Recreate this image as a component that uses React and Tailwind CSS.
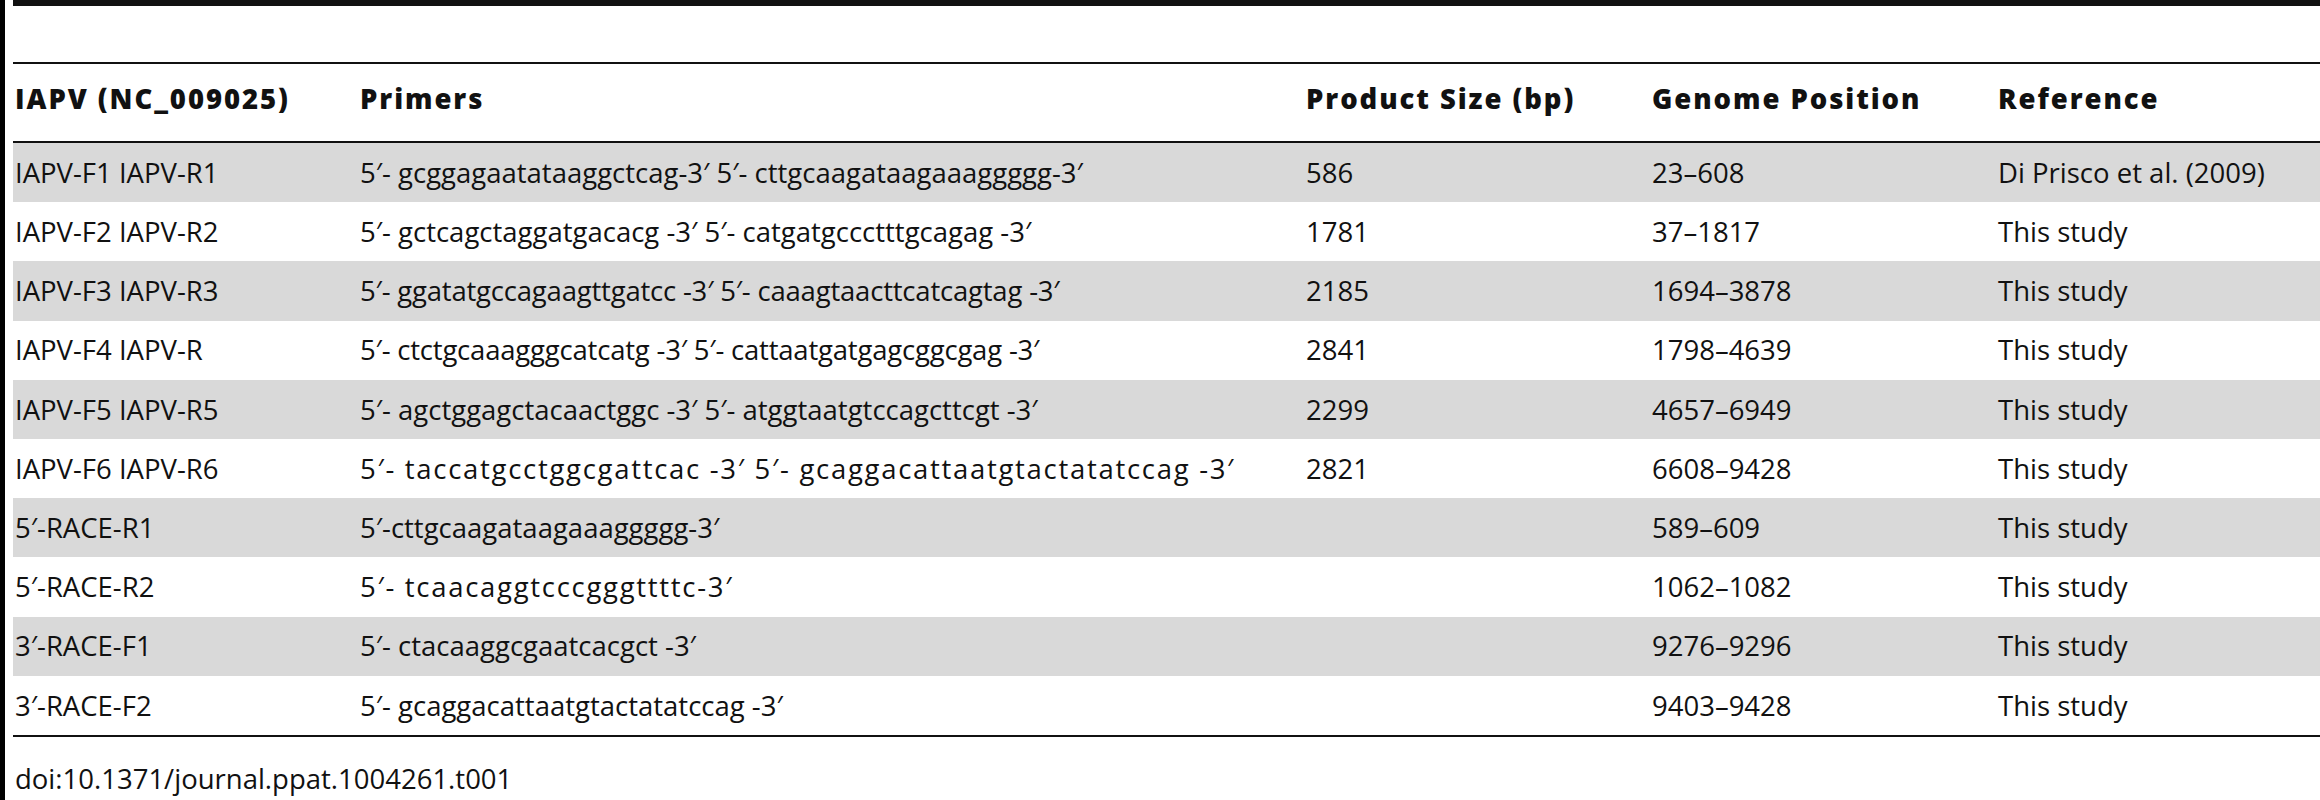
import React from 'react';

const rows = [
  ['IAPV-F1 IAPV-R1', '5′- gcggagaatataaggctcag-3′ 5′- cttgcaagataagaaaggggg-3′', '586', '23–608', 'Di Prisco et al. (2009)', ''],
  ['IAPV-F2 IAPV-R2', '5′- gctcagctaggatgacacg -3′ 5′- catgatgccctttgcagag -3′', '1781', '37–1817', 'This study', ''],
  ['IAPV-F3 IAPV-R3', '5′- ggatatgccagaagttgatcc -3′ 5′- caaagtaacttcatcagtag -3′', '2185', '1694–3878', 'This study', 'tracking-[-0.2px]'],
  ['IAPV-F4 IAPV-R', '5′- ctctgcaaagggcatcatg -3′ 5′- cattaatgatgagcggcgag -3′', '2841', '1798–4639', 'This study', 'tracking-[-0.2px]'],
  ['IAPV-F5 IAPV-R5', '5′- agctggagctacaactggc -3′ 5′- atggtaatgtccagcttcgt -3′', '2299', '4657–6949', 'This study', ''],
  ['IAPV-F6 IAPV-R6', '5′- taccatgcctggcgattcac -3′ 5′- gcaggacattaatgtactatatccag -3′', '2821', '6608–9428', 'This study', 'tracking-[1.7px]'],
  ['5′-RACE-R1', '5′-cttgcaagataagaaaggggg-3′', '', '589–609', 'This study', ''],
  ['5′-RACE-R2', '5′- tcaacaggtcccgggttttc-3′', '', '1062–1082', 'This study', 'tracking-[1.7px]'],
  ['3′-RACE-F1', '5′- ctacaaggcgaatcacgct -3′', '', '9276–9296', 'This study', ''],
  ['3′-RACE-F2', '5′- gcaggacattaatgtactatatccag -3′', '', '9403–9428', 'This study', ''],
];

const cols = 'grid grid-cols-[345px_946px_346px_346px_1fr] items-center pl-[2px]';

export default function App() {
  return (
    <div className="flex h-[800px] w-[2320px] bg-white text-[#111] font-['Open_Sans','Noto_Sans',sans-serif] text-[27.5px] leading-none overflow-hidden">
      <div className="w-[5px] bg-black" />
      <div className="ml-[8px] flex-1 flex flex-col">
        <div className="h-[6px] bg-[#111]" />
        <div className="h-[56px]" />
        <div className="h-[2px] bg-[#111]" />
        <div className={`${cols} h-[77px] font-extrabold tracking-[0.07em] pb-[8px]`}>
          <div>IAPV (NC_009025)</div>
          <div>Primers</div>
          <div>Product Size (bp)</div>
          <div>Genome Position</div>
          <div>Reference</div>
        </div>
        <div className="h-[2px] bg-[#111]" />
        {rows.map((r, i) => (
          <div key={i} className={`${cols} h-[59.2px] ${i % 2 === 0 ? 'bg-[#d9d9d9]' : 'bg-white'}`}>
            <div className="whitespace-nowrap">{r[0]}</div>
            <div className={`whitespace-nowrap ${r[5]}`}>{r[1]}</div>
            <div className="whitespace-nowrap">{r[2]}</div>
            <div className="whitespace-nowrap">{r[3]}</div>
            <div className="whitespace-nowrap">{r[4]}</div>
          </div>
        ))}
        <div className="h-[2px] bg-[#111]" />
        <div className="pl-[2px] pt-[27px] leading-[1.1]">doi:10.1371/journal.ppat.1004261.t001</div>
      </div>
    </div>
  );
}
